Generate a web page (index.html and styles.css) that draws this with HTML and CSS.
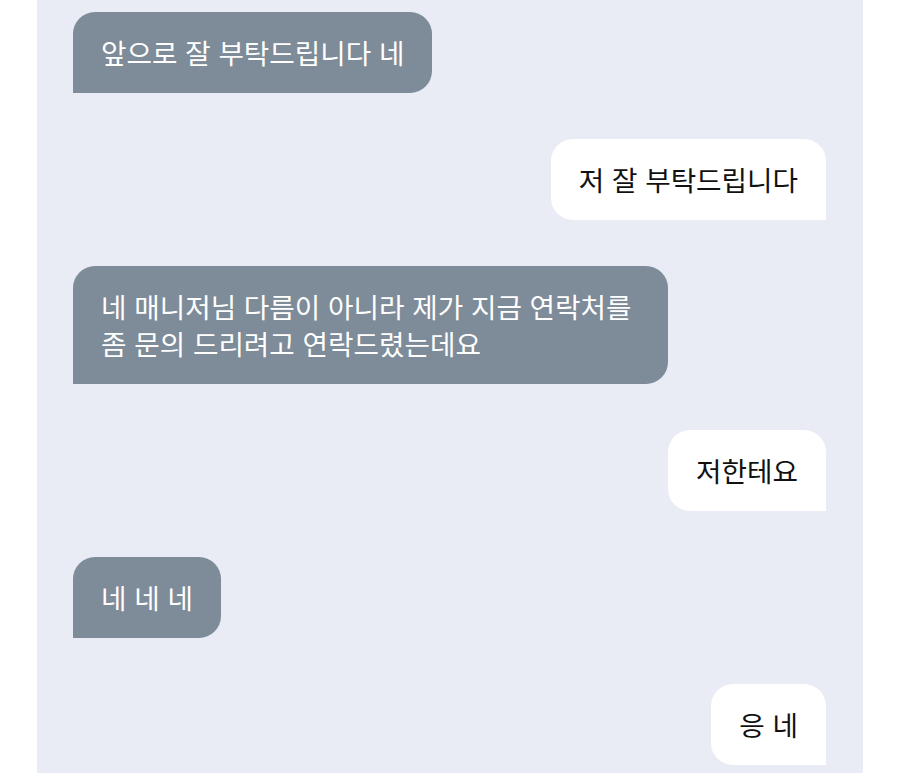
FILE: index.html
```html
<!DOCTYPE html>
<html lang="ko">
<head>
    <meta charset="UTF-8">
    <meta name="viewport" content="width=device-width, initial-scale=1.0">
    <title>대화</title>
    <link rel="stylesheet" href="styles.css">
</head>
<body>
    <div class="chat">
        <div class="msg them">앞으로 잘 부탁드립니다 네</div>
        <div class="msg me">저 잘 부탁드립니다</div>
        <div class="msg them wide">네 매니저님 다름이 아니라 제가 지금 연락처를<br>좀 문의 드리려고 연락드렸는데요</div>
        <div class="msg me">저한테요</div>
        <div class="msg them">네 네 네</div>
        <div class="msg me">응 네</div>
    </div>
</body>
</html>
```

FILE: styles.css
```css
* {
    margin: 0;
    padding: 0;
    box-sizing: border-box;
}
body {
    font-family: 'Noto Sans CJK KR', 'Noto Sans', sans-serif;
    background: #fff;
    height: 773px;
    overflow: hidden;
}
.chat {
    width: 826px;
    height: 773px;
    margin-left: 37px;
    background: #e9ebf5;
    padding: 12px 37px 0 36px;
    display: flex;
    flex-direction: column;
    gap: 46px;
}
.msg {
    font-size: 27.7px;
    line-height: 37px;
    padding: 22px 28px;
    border-radius: 22px;
    width: fit-content;
    white-space: nowrap;
}
.them {
    align-self: flex-start;
    background: #7e8b98;
    color: #fff;
    border-bottom-left-radius: 0;
}
.them.wide {
    width: 595px;
}
.me {
    align-self: flex-end;
    background: #fff;
    color: #111;
    border-bottom-right-radius: 0;
}
```
